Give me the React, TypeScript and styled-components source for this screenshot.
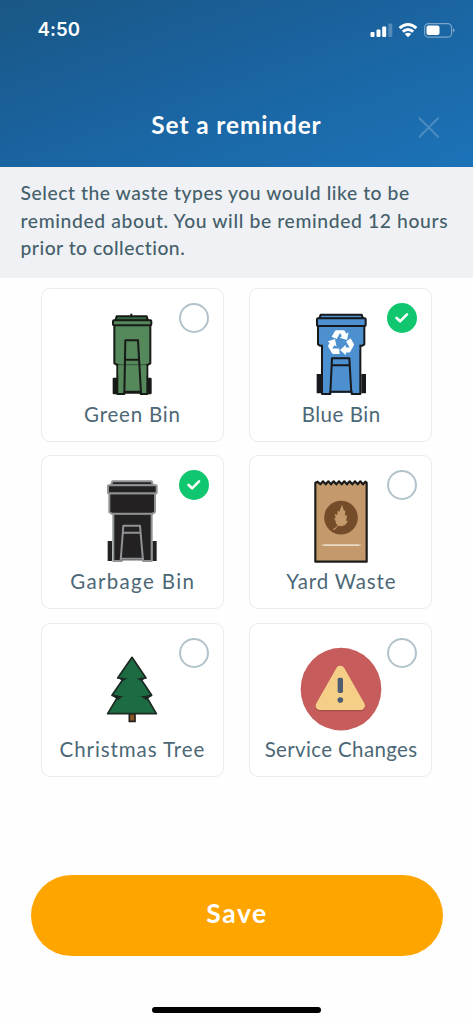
import React, { useState } from "react";
import styled, { createGlobalStyle } from "styled-components";

const GlobalStyle = createGlobalStyle`
  * { box-sizing: border-box; }
  body { margin: 0; background: #fff; }
`;

const Screen = styled.main`
  width: 473px;
  height: 1024px;
  display: flex;
  flex-direction: column;
  overflow: hidden;
  background: #fefefe;
  font-family: Lato, "Open Sans", sans-serif;
`;

const Header = styled.header`
  height: 166.5px;
  flex: none;
  background: linear-gradient(160deg, #195785 0%, #1a629d 42%, #1c73b8 100%);
  color: #fff;
`;

const StatusBar = styled.div`
  height: 60px;
  padding: 0 18px 0 37.5px;
  display: flex;
  align-items: center;
  justify-content: space-between;
`;

const Clock = styled.time`
  font: 600 18.6px/24px Inter, sans-serif;
  letter-spacing: 0.1px;
  padding-bottom: 2px;
`;

const StatusIcons = styled.svg`
  width: 85px;
  height: 18px;
`;

const TitleRow = styled.div`
  display: grid;
  grid-template-columns: 1fr auto 1fr;
  align-items: center;
  height: 130px;
  padding: 0 33px;
`;

const Title = styled.h1`
  grid-column: 2;
  margin: 0;
  font-size: 24.4px;
  line-height: 30px;
  font-weight: 700;
  letter-spacing: 0.9px;
`;

const CloseButton = styled.button`
  justify-self: end;
  display: flex;
  padding: 0;
  margin-top: 5px;
  border: 0;
  background: none;
`;

const Notice = styled.p`
  margin: 0;
  flex: none;
  height: 111px;
  padding: 12.4px 0 0 20.5px;
  background: #eff1f4;
  color: #455f6b;
  font-size: 19.3px;
  line-height: 27.7px;
  font-weight: 500;
`;

const Line = styled.span<{ $spacing: number }>`
  display: block;
  white-space: nowrap;
  letter-spacing: ${(p) => p.$spacing}px;
`;

const Grid = styled.section`
  display: grid;
  grid-template-columns: 183px 183px;
  grid-auto-rows: 154px;
  column-gap: 25.9px;
  row-gap: 13.25px;
  padding: 10.5px 0 0 40.5px;
`;

const Card = styled.button`
  position: relative;
  display: flex;
  flex-direction: column;
  align-items: center;
  padding: 23px 0 0;
  border: 1px solid #e9ecee;
  border-radius: 9px;
  background: #fff;
  font-family: inherit;
`;

const Art = styled.svg`
  width: 84px;
  height: 84px;
  flex: none;
`;

const Label = styled.span<{ $spacing: number }>`
  margin-top: 5px;
  color: #4c6876;
  font-size: 20.5px;
  line-height: 26px;
  white-space: nowrap;
  letter-spacing: ${(p) => p.$spacing}px;
  margin-right: ${(p) => -p.$spacing}px;
`;

const Mark = styled.span<{ $on: boolean }>`
  position: absolute;
  top: 14px;
  right: 14px;
  width: 30px;
  height: 30px;
  border-radius: 50%;
  display: flex;
  align-items: center;
  justify-content: center;
  border: ${(p) => (p.$on ? "0" : "2px solid #b3c3cb")};
  background: ${(p) => (p.$on ? "#10c66e" : "#fff")};
`;

const Footer = styled.footer`
  flex: 1;
  display: flex;
  flex-direction: column;
  align-items: center;
  justify-content: flex-end;
  padding-bottom: 11px;
`;

const SaveButton = styled.button`
  width: 412px;
  height: 80.5px;
  margin-bottom: 51.5px;
  border: 0;
  border-radius: 41px;
  background: #ffa500;
  color: #fff;
  font: 700 26.5px/32px Lato, sans-serif;
  letter-spacing: 1.6px;
  padding: 0 0 5px 1px;
`;

const HomeBar = styled.div`
  width: 169px;
  height: 6px;
  border-radius: 3px;
  background: #000;
`;

const GreenBin = () => (
  <Art viewBox="-30 21 252 252">
    <g fill="#55885b" stroke="#171a17" strokeWidth="6" strokeLinejoin="round">
      <path d="M41 221h13v44H41zM139 221h13v44h-13z" fill="#171a17" />
      <path d="M52 176h90v91h-20v-4H73v4H52z" />
      <path d="M43 59h108v116l-7 4H50l-7-4z" />
      <path d="M50 34h90l4 13H46z" fill="#356b42" />
      <rect x="39" y="46" width="115" height="15" rx="3" />
      <path d="M55 170h84v40H55z" stroke="none" />
      <path d="M73 264l3-158h38l9 158M75 164h40M74 260h48" fill="none" />
      <path d="M46 179h102" strokeWidth="1.5" />
      <path d="M94 26v10" strokeWidth="6" />
    </g>
  </Art>
);

const BlueBin = () => (
  <Art viewBox="-27 21 252 252">
    <g fill="#4c90cf" stroke="#17191c" strokeWidth="6" strokeLinejoin="round">
      <path d="M26 207h14v58H26zM160 207h14v58h-14z" fill="#17191c" stroke="none" />
      <path d="M42 122h115v145h-26v-6H67v6H42z" />
      <path d="M30 62h139v56l-6 4H36l-6-4z" />
      <path d="M38 29h123l4 12H34z" />
      <rect x="27" y="40" width="146" height="23" rx="3" />
      <path d="M45 114h109v20H45z" stroke="none" />
      <path d="M67 264l5-104h52l6 104M72 181h54M67 260h64" />
    </g>
    <g fill="#fff" transform="translate(98 114)">
      {[0, 120, 240].map((angle) => (
        <path
          key={angle}
          transform={`rotate(${angle})`}
          d="M-27-19L-17-36Q-15-38-12-38H8Q11-38 13-35L17-28 24-32 19-9-3-16 4-20-2-30-12-12Z"
        />
      ))}
    </g>
  </Art>
);

const GarbageBin = () => (
  <Art viewBox="-30 21 252 252">
    <path d="M23 207h13v60H23zM157 207h13v60h-13z" fill="#222021" />
    <g fill="#242122" stroke="#909295" strokeWidth="6" strokeLinejoin="round">
      <path d="M40 124h115v143h-26v-5H65v5H40z" />
      <path d="M28 64h137v56l-7 5H35l-7-5z" />
      <path d="M37 28h118l4 12H33z" />
      <rect x="24" y="40" width="146" height="24" rx="2" />
      <path d="M62 265l8-104h50l9 104M70 182h53M63 260h64" />
    </g>
  </Art>
);

const YardBag = () => (
  <Art viewBox="-27 21 252 252">
    <path
      d="M22 32l7-3 8 8 8-9 8 9 8-9 8 9 8-9 8 9 8-9 8 9 8-9 8 9 8-9 8 9 8-9 8 9 8-9 8 9 7-8 4 3v237H22z"
      fill="#c49a6c"
      stroke="#1b1b1b"
      strokeWidth="6.5"
      strokeLinejoin="round"
    />
    <circle cx="99" cy="137" r="50.5" fill="#754c29" />
    <path
      d="M75 171c3-1 8-3 14-12l-5-4-2-10-4-5 5-3-3-12 8 4 1-13 5 3 8-21 6 19 4-3-1 18 7-3-4 17 6 1-8 11-11 5-11-2c-6 8-9 13-15 13z"
      fill="#c49a6c"
    />
    <path d="M38 219l12-2h100l12 2-12 3H50z" fill="#eadbc8" />
  </Art>
);

const Tree = () => (
  <Art viewBox="-30 3 252 252">
    <path d="M88 203h17v23H88z" fill="#8a5528" stroke="#23211c" strokeWidth="5" />
    <path
      d="M96 34l42 62-16 2 33 50-16 3 30 52H23l31-52-18-3 34-50-17-2z"
      fill="#1d6b43"
      stroke="#1c2822"
      strokeWidth="5"
      strokeLinejoin="round"
    />
    <path d="M54 97h29l-14 8zM138 97h-29l14 8zM37 150h33l-16 12zM155 150h-33l16 12z" fill="#1c2822" />
  </Art>
);

const Warning = () => (
  <Art viewBox="12 19 252 252">
    <ellipse cx="138" cy="145.5" rx="121" ry="124" fill="#c75c5c" />
    <g strokeWidth="26" strokeLinejoin="round">
      <path d="M136 92l61 107H75z" fill="#a34e4b" stroke="#a34e4b" />
      <path d="M136 88l61 107H75z" fill="#f5cf87" stroke="#f5cf87" />
    </g>
    <rect x="128" y="111" width="16" height="46" rx="5" fill="#4f5d73" />
    <circle cx="136" cy="178" r="8.5" fill="#4f5d73" />
  </Art>
);

const wasteTypes = [
  { name: "Green Bin", spacing: 0.78, Icon: GreenBin },
  { name: "Blue Bin", spacing: 0.52, Icon: BlueBin },
  { name: "Garbage Bin", spacing: 1.35, Icon: GarbageBin },
  { name: "Yard Waste", spacing: 0.86, Icon: YardBag },
  { name: "Christmas Tree", spacing: 0.92, Icon: Tree },
  { name: "Service Changes", spacing: 0.36, Icon: Warning },
];

export default function App() {
  const [selected, setSelected] = useState(["Blue Bin", "Garbage Bin"]);
  const toggle = (name: string) =>
    setSelected((s) => (s.includes(name) ? s.filter((n) => n !== name) : [...s, name]));

  return (
    <Screen>
      <GlobalStyle />
      <Header>
        <StatusBar>
          <Clock>4:50</Clock>
          <StatusIcons viewBox="370 20 85 18" fill="#fff">
            <rect x="370.5" y="31" width="4" height="5" rx="1" />
            <rect x="376.5" y="28.5" width="4" height="7.5" rx="1" />
            <rect x="382.2" y="25.5" width="4" height="10.5" rx="1" />
            <rect x="388.3" y="22.5" width="4" height="13.5" rx="1" opacity=".25" />
            <g fill="none" stroke="#fff" strokeWidth="2.9">
              <path d="M399.6 27.2q8.4-7.4 16.8 0" />
              <path d="M402.8 30.7q5.2-4.4 10.4 0" />
            </g>
            <path d="M404.8 32.9q3.2-2.5 6.4 0L408 36.2z" />
            <rect x="424.6" y="22.6" width="27" height="13.6" rx="4" fill="none" stroke="#fff" strokeOpacity=".42" strokeWidth="1.2" />
            <rect x="426.5" y="24.5" width="13" height="9.6" rx="2" />
            <path d="M453 27.3q3 2 0 4z" opacity=".45" />
          </StatusIcons>
        </StatusBar>
        <TitleRow>
          <Title>Set a reminder</Title>
          <CloseButton aria-label="Close">
            <svg width="22" height="22" viewBox="0 0 22 22">
              <path d="M1.5 1.3l18.5 18.5M20 1.3L1.5 19.8" stroke="#4a8abf" strokeWidth="2.2" strokeLinecap="round" />
            </svg>
          </CloseButton>
        </TitleRow>
      </Header>
      <Notice>
        <Line $spacing={0.55}>Select the waste types you would like to be</Line>
        <Line $spacing={0.63}>reminded about. You will be reminded 12 hours</Line>
        <Line $spacing={0.51}>prior to collection.</Line>
      </Notice>
      <Grid>
        {wasteTypes.map(({ name, spacing, Icon }) => {
          const on = selected.includes(name);
          return (
            <Card key={name} aria-pressed={on} onClick={() => toggle(name)}>
              <Icon />
              <Label $spacing={spacing}>{name}</Label>
              <Mark $on={on}>
                {on && (
                  <svg width="14" height="12" viewBox="0 0 14 12">
                    <path d="M1.6 6l3.5 3.3L12 2.4" fill="none" stroke="#fff" strokeWidth="2.6" strokeLinecap="round" strokeLinejoin="round" />
                  </svg>
                )}
              </Mark>
            </Card>
          );
        })}
      </Grid>
      <Footer>
        <SaveButton>Save</SaveButton>
        <HomeBar />
      </Footer>
    </Screen>
  );
}
